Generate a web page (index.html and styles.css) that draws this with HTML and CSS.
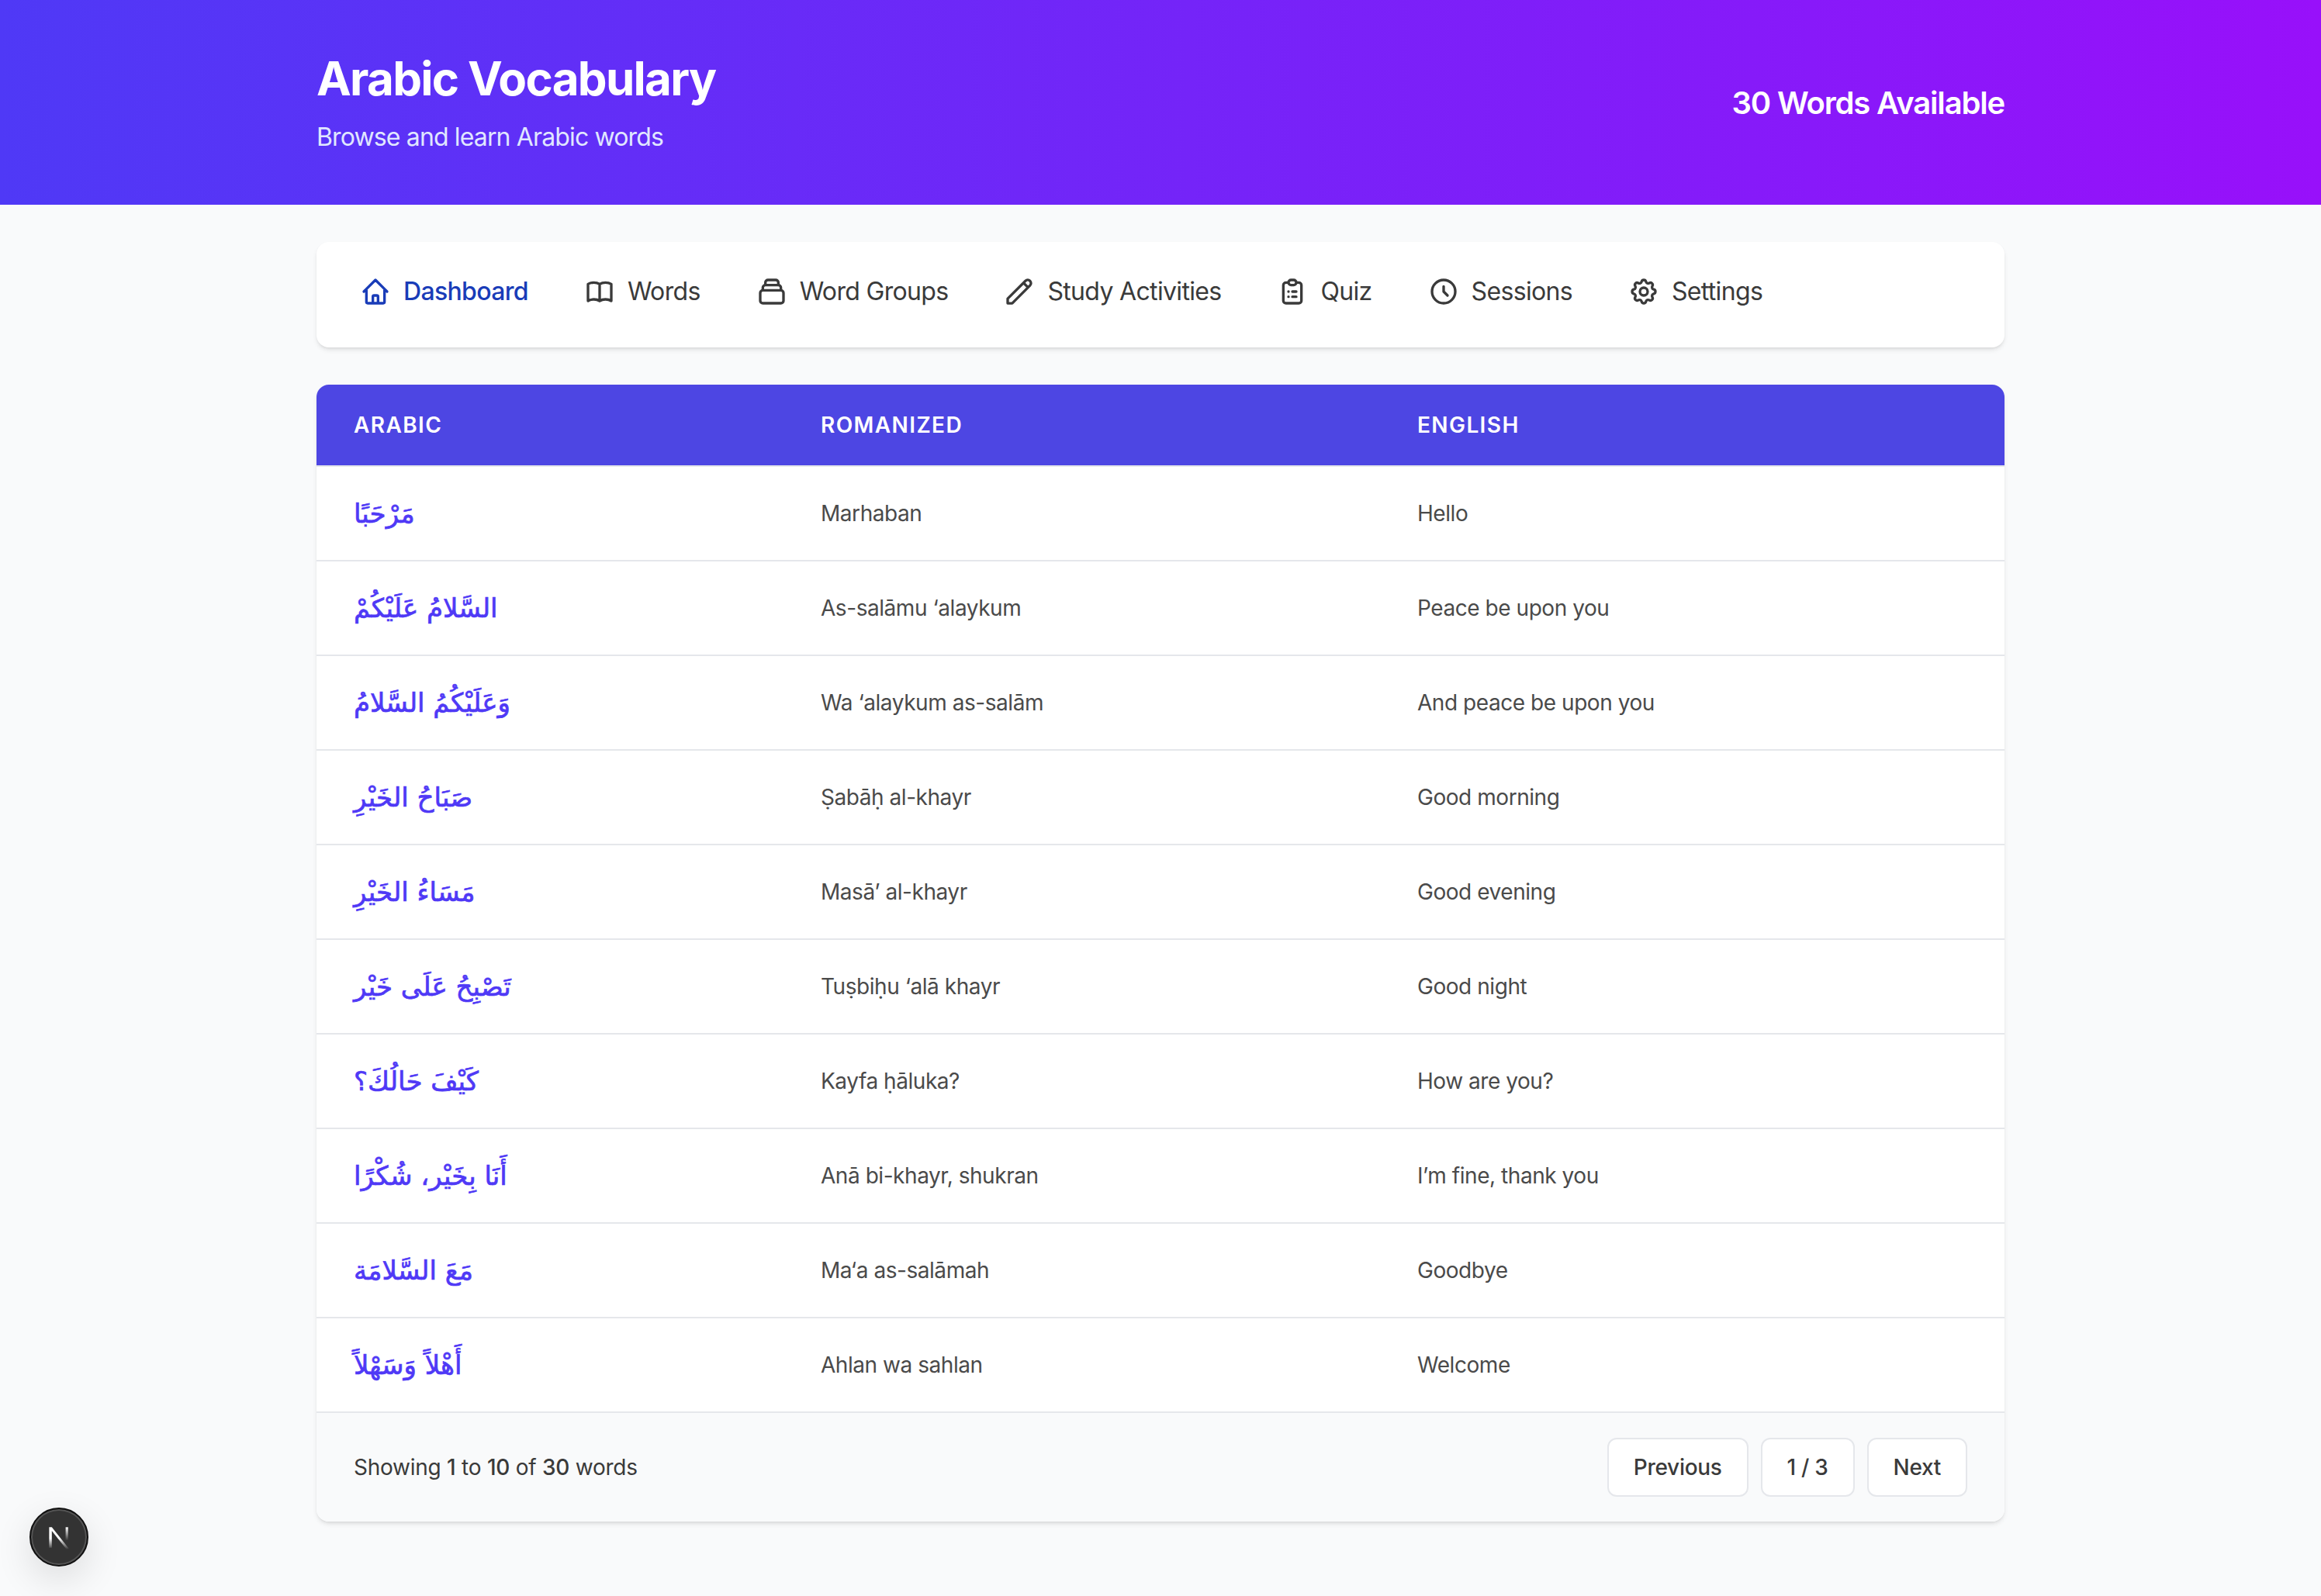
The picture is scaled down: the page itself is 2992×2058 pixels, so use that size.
FILE: index.html
```html
<!DOCTYPE html>
<html lang="en">
<head>
    <meta charset="UTF-8">
    <meta name="viewport" content="width=device-width, initial-scale=1.0">
    <title>Arabic Vocabulary</title>
    <link rel="stylesheet" href="styles.css">
</head>
<body>
    <header class="site-header">
        <div class="container header-inner">
            <div>
                <h1 class="site-title">Arabic Vocabulary</h1>
                <p class="site-subtitle">Browse and learn Arabic words</p>
            </div>
            <div class="word-count">30 Words Available</div>
        </div>
    </header>

    <main class="container">
        <nav class="main-nav">
            <a class="nav-item active" href="#">
                <svg class="nav-icon" viewBox="0 0 24 24"><path d="M3 12l2-2m0 0l7-7 7 7M5 10v10a1 1 0 001 1h3m10-11l2 2m-2-2v10a1 1 0 01-1 1h-3m-6 0a1 1 0 001-1v-4a1 1 0 011-1h2a1 1 0 011 1v4a1 1 0 001 1m-6 0h6"/></svg>
                Dashboard
            </a>
            <a class="nav-item" href="#">
                <svg class="nav-icon" viewBox="0 0 24 24"><path d="M12 6.253v13m0-13C10.832 5.477 9.246 5 7.5 5S4.168 5.477 3 6.253v13C4.168 18.477 5.754 18 7.5 18s3.332.477 4.5 1.253m0-13C13.168 5.477 14.754 5 16.5 5c1.747 0 3.332.477 4.5 1.253v13C19.832 18.477 18.247 18 16.5 18c-1.746 0-3.332.477-4.5 1.253"/></svg>
                Words
            </a>
            <a class="nav-item" href="#">
                <svg class="nav-icon" viewBox="0 0 24 24"><path d="M19 11H5m14 0a2 2 0 012 2v6a2 2 0 01-2 2H5a2 2 0 01-2-2v-6a2 2 0 012-2m14 0V9a2 2 0 00-2-2M5 11V9a2 2 0 012-2m0 0V5a2 2 0 012-2h6a2 2 0 012 2v2M7 7h10"/></svg>
                Word Groups
            </a>
            <a class="nav-item" href="#">
                <svg class="nav-icon" viewBox="0 0 24 24"><path d="M15.232 5.232l3.536 3.536m-2.036-5.036a2.5 2.5 0 113.536 3.536L6.5 21.036H3v-3.572L16.732 3.732z"/></svg>
                Study Activities
            </a>
            <a class="nav-item" href="#">
                <svg class="nav-icon" viewBox="0 0 24 24"><path d="M9 5H7a2 2 0 00-2 2v12a2 2 0 002 2h10a2 2 0 002-2V7a2 2 0 00-2-2h-2M9 5a2 2 0 002 2h2a2 2 0 002-2M9 5a2 2 0 012-2h2a2 2 0 012 2m-3 7h3m-3 4h3m-6-4h.01M9 16h.01"/></svg>
                Quiz
            </a>
            <a class="nav-item" href="#">
                <svg class="nav-icon" viewBox="0 0 24 24"><path d="M12 8v4l3 3m6-3a9 9 0 11-18 0 9 9 0 0118 0z"/></svg>
                Sessions
            </a>
            <a class="nav-item" href="#">
                <svg class="nav-icon" viewBox="0 0 24 24"><path d="M10.325 4.317c.426-1.756 2.924-1.756 3.35 0a1.724 1.724 0 002.573 1.066c1.543-.94 3.31.826 2.37 2.37a1.724 1.724 0 001.065 2.572c1.756.426 1.756 2.924 0 3.35a1.724 1.724 0 00-1.066 2.573c.94 1.543-.826 3.31-2.37 2.37a1.724 1.724 0 00-2.572 1.065c-.426 1.756-2.924 1.756-3.35 0a1.724 1.724 0 00-2.573-1.066c-1.543.94-3.31-.826-2.37-2.37a1.724 1.724 0 00-1.065-2.572c-1.756-.426-1.756-2.924 0-3.35a1.724 1.724 0 001.066-2.573c-.94-1.543.826-3.31 2.37-2.37.996.608 2.296.07 2.572-1.065z"/><path d="M15 12a3 3 0 11-6 0 3 3 0 016 0z"/></svg>
                Settings
            </a>
        </nav>

        <section class="word-card">
            <table class="word-table">
                <thead>
                    <tr>
                        <th class="col-arabic">Arabic</th>
                        <th class="col-roman">Romanized</th>
                        <th>English</th>
                    </tr>
                </thead>
                <tbody>
                    <tr><td class="arabic" lang="ar" dir="rtl">مَرْحَبًا</td><td>Marhaban</td><td>Hello</td></tr>
                    <tr><td class="arabic" lang="ar" dir="rtl">السَّلامُ عَلَيْكُمْ</td><td>As-salāmu ‘alaykum</td><td>Peace be upon you</td></tr>
                    <tr><td class="arabic" lang="ar" dir="rtl">وَعَلَيْكُمُ السَّلامُ</td><td>Wa ‘alaykum as-salām</td><td>And peace be upon you</td></tr>
                    <tr><td class="arabic" lang="ar" dir="rtl">صَبَاحُ الخَيْرِ</td><td>Ṣabāḥ al-khayr</td><td>Good morning</td></tr>
                    <tr><td class="arabic" lang="ar" dir="rtl">مَسَاءُ الخَيْرِ</td><td>Masā’ al-khayr</td><td>Good evening</td></tr>
                    <tr><td class="arabic" lang="ar" dir="rtl">تَصْبِحُ عَلَى خَيْر</td><td>Tuṣbiḥu ‘alā khayr</td><td>Good night</td></tr>
                    <tr><td class="arabic" lang="ar" dir="rtl">كَيْفَ حَالُكَ؟</td><td>Kayfa ḥāluka?</td><td>How are you?</td></tr>
                    <tr><td class="arabic" lang="ar" dir="rtl">أَنَا بِخَيْر، شُكْرًا</td><td>Anā bi-khayr, shukran</td><td>I’m fine, thank you</td></tr>
                    <tr><td class="arabic" lang="ar" dir="rtl">مَعَ السَّلامَة</td><td>Ma‘a as-salāmah</td><td>Goodbye</td></tr>
                    <tr><td class="arabic" lang="ar" dir="rtl">أَهْلاً وَسَهْلاً</td><td>Ahlan wa sahlan</td><td>Welcome</td></tr>
                </tbody>
            </table>
            <div class="table-footer">
                <p class="showing">Showing <b>1</b> to <b>10</b> of <b>30</b> words</p>
                <div class="pager">
                    <button class="page-btn">Previous</button>
                    <button class="page-btn">1 / 3</button>
                    <button class="page-btn">Next</button>
                </div>
            </div>
        </section>
    </main>

    <div class="dev-badge">
        <svg viewBox="0 0 26 27" class="dev-logo">
            <defs>
                <linearGradient id="fadeDiag" x1="0" y1="0" x2="0" y2="1">
                    <stop offset="0.5" stop-color="#fff"/>
                    <stop offset="1" stop-color="#fff" stop-opacity="0"/>
                </linearGradient>
                <linearGradient id="fadeStem" x1="0" y1="0" x2="0" y2="1">
                    <stop offset="0" stop-color="#fff"/>
                    <stop offset="1" stop-color="#fff" stop-opacity="0"/>
                </linearGradient>
            </defs>
            <path d="M2 2h3L24 26l-2.4 1L5 6v19H2z" fill="url(#fadeDiag)"/>
            <rect x="20.5" y="2" width="2.8" height="15" fill="url(#fadeStem)"/>
        </svg>
    </div>
</body>
</html>
```

FILE: styles.css
```css
* {
    box-sizing: border-box;
}
body {
    font-family: Inter, "Noto Sans", sans-serif;
    background-color: #f9fafb;
    color: #3a3a3a;
    margin: 0;
    padding: 0;
}
.container {
    width: 2176px;
    margin: 0 auto;
}
.site-header {
    background: linear-gradient(90deg, #4f39f6, #9810fa);
    color: #fff;
    padding: 65px 0 63px;
}
.header-inner {
    display: flex;
    justify-content: space-between;
    align-items: center;
}
.site-title {
    font-size: 60px;
    line-height: 72px;
    font-weight: 700;
    letter-spacing: -1.7px;
    margin: 0 0 16px;
}
.site-subtitle {
    font-size: 32px;
    line-height: 48px;
    letter-spacing: -0.86px;
    color: #e0e7ff;
    margin: 0;
}
.word-count {
    font-size: 40px;
    line-height: 56px;
    font-weight: 600;
    letter-spacing: -1.17px;
}
main {
    padding: 48px 0 96px;
}
.main-nav {
    display: flex;
    gap: 8px;
    padding: 20px 24px 28px;
    background-color: #fff;
    border-radius: 16px;
    box-shadow: 0 4px 6px -1px rgba(0, 0, 0, 0.1), 0 2px 4px -2px rgba(0, 0, 0, 0.1);
    margin-bottom: 48px;
}
.nav-item {
    display: flex;
    align-items: center;
    gap: 16px;
    padding: 24px 32px;
    font-size: 32px;
    line-height: 40px;
    letter-spacing: -0.67px;
    color: #3a3a3a;
    text-decoration: none;
}
.nav-item.active {
    color: #193cb8;
    font-weight: 500;
}
.nav-icon {
    width: 40px;
    height: 40px;
    fill: none;
    stroke: currentColor;
    stroke-width: 2;
    stroke-linecap: round;
    stroke-linejoin: round;
}
.word-card {
    background-color: #fff;
    border-radius: 16px;
    box-shadow: 0 4px 6px -1px rgba(0, 0, 0, 0.1), 0 2px 4px -2px rgba(0, 0, 0, 0.1);
    overflow: hidden;
}
.word-table {
    width: 100%;
    table-layout: fixed;
    border-collapse: collapse;
}
.word-table th {
    background-color: #4d46e3;
    color: #fff;
    font-size: 28px;
    line-height: 40px;
    font-weight: 600;
    letter-spacing: 1.4px;
    text-align: left;
    text-transform: uppercase;
    padding: 32px 48px;
    border-bottom: 2px solid #e5e7eb;
}
.col-arabic {
    width: 602px;
}
.col-roman {
    width: 769px;
}
.word-table td {
    height: 122px;
    padding: 0 48px;
    font-size: 28px;
    letter-spacing: -0.45px;
    color: #4a4a4a;
    border-bottom: 2px solid #e5e7eb;
}
.word-table td.arabic {
    font-family: "DejaVu Sans", sans-serif;
    font-size: 34px;
    letter-spacing: 0;
    color: #4f39f6;
    text-align: left;
    -webkit-text-stroke: 0.7px #4f39f6;
}
.table-footer {
    display: flex;
    justify-content: space-between;
    align-items: center;
    padding: 32px 48px;
    background-color: #f9fafb;
}
.showing {
    font-size: 28px;
    letter-spacing: -0.25px;
    margin: 0;
}
.showing b {
    font-weight: 500;
}
.pager {
    display: flex;
    gap: 16px;
}
.page-btn {
    font-family: inherit;
    font-size: 28px;
    line-height: 40px;
    font-weight: 500;
    letter-spacing: -0.3px;
    color: #3a3a3a;
    background-color: #fff;
    border: 2px solid #e5e7eb;
    border-radius: 12px;
    padding: 16px 32px;
}
.dev-badge {
    position: fixed;
    left: 38px;
    bottom: 38px;
    width: 76px;
    height: 76px;
    display: flex;
    align-items: center;
    justify-content: center;
    background-color: #333;
    border: 2px solid #111;
    border-radius: 50%;
    box-shadow: inset 0 0 0 2px #555, 0 16px 48px rgba(0, 0, 0, 0.12);
}
.dev-logo {
    width: 30px;
    height: 31px;
}
```
